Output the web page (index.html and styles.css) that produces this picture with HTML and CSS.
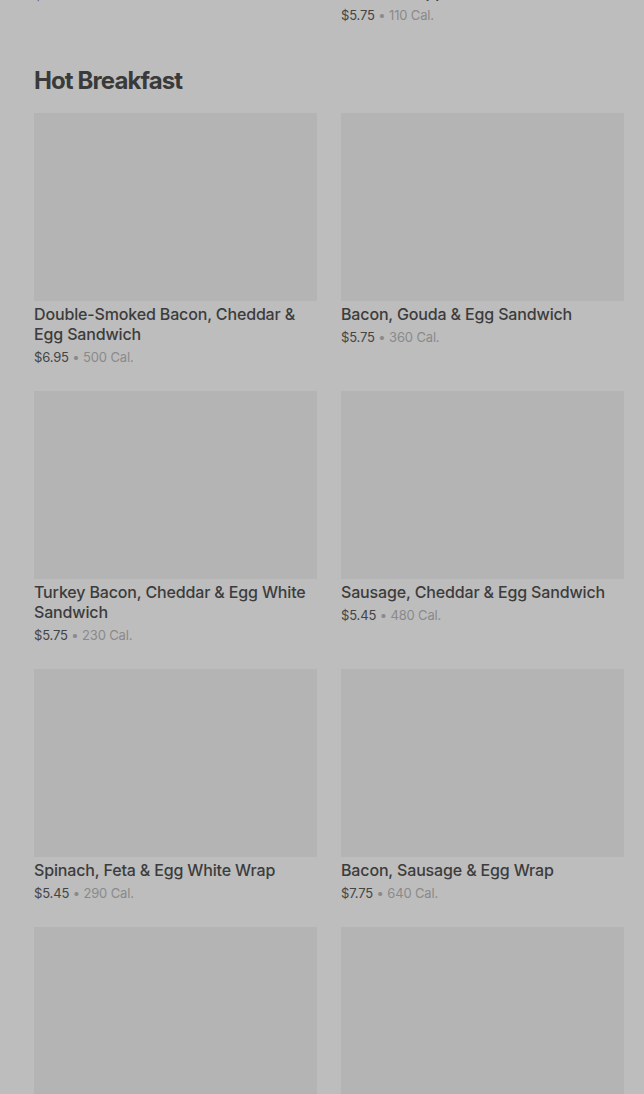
FILE: index.html
```html
<!DOCTYPE html>
<html lang="en">
<head>
    <meta charset="UTF-8">
    <meta name="viewport" content="width=device-width, initial-scale=1.0">
    <title>Menu</title>
    <link rel="stylesheet" href="styles.css">
</head>
<body>

<div class="menu">
    <div class="grid grid-prev">
        <div class="card">
            <div class="thumb"></div>
            <div class="name">Bacon &amp; Gruyère Egg Bites</div>
            <div class="meta"><span class="price">$5.95</span> • <span>300 Cal.</span></div>
        </div>
        <div class="card">
            <div class="thumb"></div>
            <div class="name">Kale &amp; Mushroom Egg Bites with Roasted Peppers</div>
            <div class="meta"><span class="price">$5.75</span> • <span>110 Cal.</span></div>
        </div>
    </div>

    <h2 class="section-title">Hot Breakfast</h2>
    <div class="grid">
        <div class="card">
            <div class="thumb"></div>
            <div class="name">Double-Smoked Bacon, Cheddar &amp; Egg Sandwich</div>
            <div class="meta"><span class="price">$6.95</span> • <span>500 Cal.</span></div>
        </div>
        <div class="card">
            <div class="thumb"></div>
            <div class="name">Bacon, Gouda &amp; Egg Sandwich</div>
            <div class="meta"><span class="price">$5.75</span> • <span>360 Cal.</span></div>
        </div>
        <div class="card">
            <div class="thumb"></div>
            <div class="name">Turkey Bacon, Cheddar &amp; Egg White Sandwich</div>
            <div class="meta"><span class="price">$5.75</span> • <span>230 Cal.</span></div>
        </div>
        <div class="card">
            <div class="thumb"></div>
            <div class="name">Sausage, Cheddar &amp; Egg Sandwich</div>
            <div class="meta"><span class="price">$5.45</span> • <span>480 Cal.</span></div>
        </div>
        <div class="card">
            <div class="thumb"></div>
            <div class="name">Spinach, Feta &amp; Egg White Wrap</div>
            <div class="meta"><span class="price">$5.45</span> • <span>290 Cal.</span></div>
        </div>
        <div class="card">
            <div class="thumb"></div>
            <div class="name">Bacon, Sausage &amp; Egg Wrap</div>
            <div class="meta"><span class="price">$7.75</span> • <span>640 Cal.</span></div>
        </div>
        <div class="card">
            <div class="thumb"></div>
            <div class="name">Impossible™ Breakfast Sandwich</div>
            <div class="meta"><span class="price">$6.45</span> • <span>420 Cal.</span></div>
        </div>
        <div class="card">
            <div class="thumb"></div>
            <div class="name">Ham &amp; Swiss on Baguette</div>
            <div class="meta"><span class="price">$6.25</span> • <span>500 Cal.</span></div>
        </div>
    </div>
</div>

</body>
</html>
```

FILE: styles.css
```css
html, body {
    margin: 0;
    background-color: #bdbdbd;
}
body {
    font-family: Inter, "Noto Sans", sans-serif;
    color: #3b3b3b;
    overflow: hidden;
}
.menu {
    padding: 0 20px 0 34px;
}
.grid {
    display: grid;
    grid-template-columns: 283px 283px;
    column-gap: 24px;
    row-gap: 24px;
}
.grid-prev {
    margin-top: -229px;
}
.thumb {
    height: 188px;
    background-color: #b4b4b4;
}
.name {
    margin-top: 3px;
    font-size: 16px;
    line-height: 20px;
    font-weight: 500;
    letter-spacing: -0.15px;
    color: #3c3c3c;
}
.meta {
    margin-top: 3px;
    font-size: 13px;
    line-height: 20px;
    letter-spacing: -0.15px;
    color: #8a8a8a;
}
.price {
    color: #444;
}
.section-title {
    margin: 40px 0 16px;
    font-size: 24px;
    line-height: 32px;
    font-weight: 700;
    color: #3a3a3a;
    letter-spacing: -0.9px;
}
```
